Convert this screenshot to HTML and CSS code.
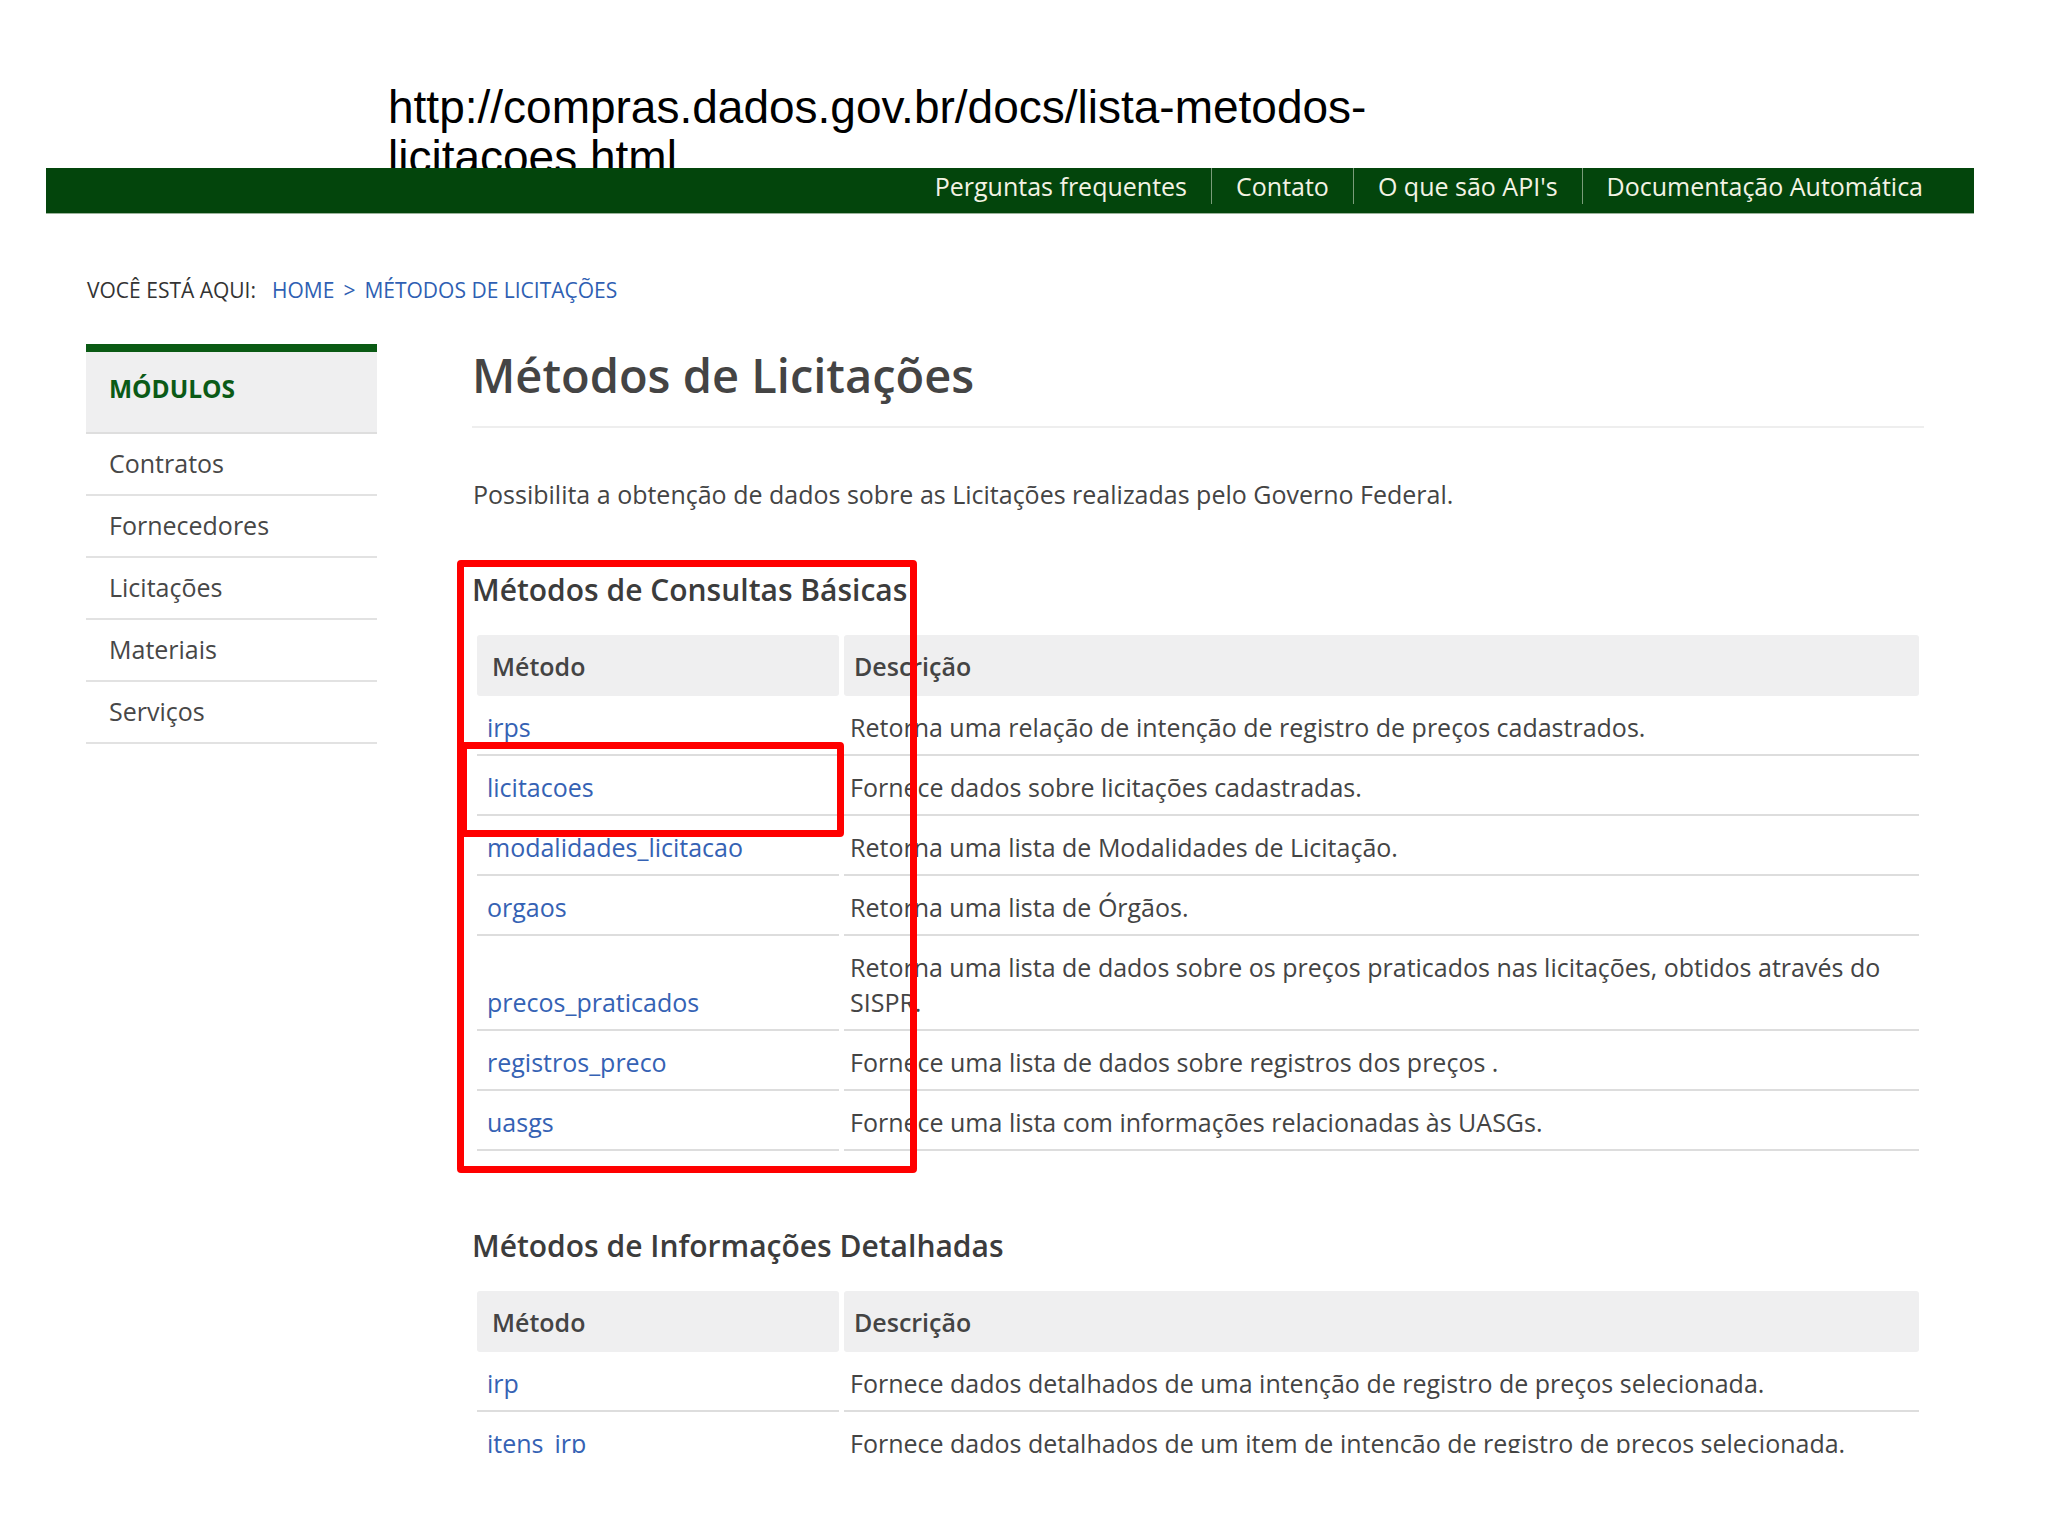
FILE: index.html
```html
<!DOCTYPE html>
<html lang="pt-BR">
<head>
<meta charset="utf-8">
<title>Métodos de Licitações</title>
<link rel="stylesheet" href="styles.css">
</head>
<body>
<div class="slide-head">
  <p class="url">http://compras.dados.gov.br/docs/lista-metodos-<br>licitacoes.html</p>
</div>
<div class="shot">
  <nav class="topnav">
    <a class="nav-item" href="#">Perguntas frequentes</a>
    <a class="nav-item" href="#">Contato</a>
    <a class="nav-item" href="#">O que são API's</a>
    <a class="nav-item" href="#">Documentação Automática</a>
  </nav>
  <div class="crumbs">
    <span class="crumb-label">VOCÊ ESTÁ AQUI:</span>
    <a class="crumb-link" href="#">HOME</a>
    <span class="crumb-sep">&gt;</span>
    <a class="crumb-link" href="#">MÉTODOS DE LICITAÇÕES</a>
  </div>
  <div class="layout">
    <aside class="side">
      <div class="side-head">MÓDULOS</div>
      <a class="side-item" href="#">Contratos</a>
      <a class="side-item" href="#">Fornecedores</a>
      <a class="side-item" href="#">Licitações</a>
      <a class="side-item" href="#">Materiais</a>
      <a class="side-item" href="#">Serviços</a>
    </aside>
    <main class="content">
      <h1 class="page-title">Métodos de Licitações</h1>
      <p class="lead">Possibilita a obtenção de dados sobre as Licitações realizadas pelo Governo Federal.</p>
      <h3 class="sec-title">Métodos de Consultas Básicas</h3>
      <table class="methods">
        <thead>
          <tr><th class="col-m">Método</th><th>Descrição</th></tr>
        </thead>
        <tbody>
          <tr><td><a href="#">irps</a></td><td>Retorna uma relação de intenção de registro de preços cadastrados.</td></tr>
          <tr><td><a href="#">licitacoes</a></td><td>Fornece dados sobre licitações cadastradas.</td></tr>
          <tr><td><a href="#">modalidades_licitacao</a></td><td>Retorna uma lista de Modalidades de Licitação.</td></tr>
          <tr><td><a href="#">orgaos</a></td><td>Retorna uma lista de Órgãos.</td></tr>
          <tr><td><a href="#">precos_praticados</a></td><td>Retorna uma lista de dados sobre os preços praticados nas licitações, obtidos através do SISPR.</td></tr>
          <tr><td><a href="#">registros_preco</a></td><td>Fornece uma lista de dados sobre registros dos preços .</td></tr>
          <tr><td><a href="#">uasgs</a></td><td>Fornece uma lista com informações relacionadas às UASGs.</td></tr>
        </tbody>
      </table>
      <h3 class="sec-title sec-two">Métodos de Informações Detalhadas</h3>
      <table class="methods">
        <thead>
          <tr><th class="col-m">Método</th><th>Descrição</th></tr>
        </thead>
        <tbody>
          <tr><td><a href="#">irp</a></td><td>Fornece dados detalhados de uma intenção de registro de preços selecionada.</td></tr>
          <tr><td><a href="#">itens_irp</a></td><td>Fornece dados detalhados de um item de intenção de registro de preços selecionada.</td></tr>
        </tbody>
      </table>
    </main>
  </div>
  <div class="mark mark-big"></div>
  <div class="mark mark-small"></div>
</div>
</body>
</html>
```
FILE: styles.css
```css
html, body {
  margin: 0;
  padding: 0;
  background: #ffffff;
}
body {
  width: 2048px;
  height: 1535px;
  overflow: hidden;
  font-family: "Open Sans", "Noto Sans", sans-serif;
  color: #444444;
}
a { text-decoration: none; }

/* slide title (URL text box, partly covered by the screenshot) */
.slide-head {
  height: 168px;
  box-sizing: border-box;
  padding: 82px 0 0 388px;
  overflow: hidden;
}
.url {
  margin: 0;
  font-family: "Liberation Sans", Arial, sans-serif;
  font-size: 46px;
  line-height: 50px;
  color: #000000;
  white-space: nowrap;
}

/* screenshot */
.shot {
  position: relative;
  margin-left: 46px;
  width: 1928px;
  height: 1285px;
  overflow: hidden;
  background: #ffffff;
}

.topnav {
  height: 46px;
  background: #03450c;
  display: flex;
  justify-content: flex-end;
  align-items: flex-start;
  padding-right: 27px;
  border-bottom: 1px solid #9bb39b;
  box-sizing: border-box;
}
.nav-item {
  height: 36px;
  line-height: 36px;
  padding: 0 24px;
  font-size: 25px;
  color: #f3f3e4;
  border-left: 1px solid #7a9c7a;
}
.nav-item:first-child { border-left: none; }

.crumbs {
  margin: 61px 0 0 41px;
  font-size: 21px;
  line-height: 30px;
  display: flex;
}
.crumb-label { color: #333333; margin-right: 16px; }
.crumb-link { color: #2f5fb3; }
.crumb-sep { color: #2f5fb3; margin: 0 9px; }

.layout {
  display: flex;
  gap: 95px;
  margin-top: 39px;
  padding-left: 40px;
}

.side {
  width: 291px;
  flex: none;
  display: flex;
  flex-direction: column;
}
.side-head {
  border-top: 8px solid #0a5a14;
  background: #efeff0;
  border-bottom: 2px solid #dedede;
  padding: 21px 23px 27px;
  line-height: 32px;
  font-size: 24.5px;
  font-weight: 700;
  color: #0b5a17;
}
.side-item {
  padding: 12px 23px 13px;
  line-height: 35px;
  font-size: 25px;
  color: #474747;
  border-bottom: 2px solid #e2e2e2;
}

.content {
  width: 1452px;
  flex: none;
}
.page-title {
  margin: 0;
  padding: 1px 0 21px;
  font-size: 47px;
  line-height: 60px;
  font-weight: 600;
  color: #444444;
  border-bottom: 2px solid #eeeeee;
}
.lead {
  margin: 50px 0 0 1px;
  font-size: 25px;
  line-height: 32px;
  color: #444444;
}
.sec-title {
  margin: 60px 0 0;
  font-size: 30px;
  line-height: 40px;
  font-weight: 600;
  color: #3c3c3c;
}
.sec-two { margin-top: 75px; }

.methods {
  margin-top: 25px;
  width: 1452px;
  border-collapse: separate;
  border-spacing: 5px 0;
  font-size: 25px;
  line-height: 35px;
  table-layout: fixed;
}
.methods th {
  background: #efeff0;
  text-align: left;
  font-weight: 600;
  color: #444444;
  padding: 14px 10px 12px;
  border-radius: 3px;
}
.methods th.col-m { width: 334px; padding-left: 15px; padding-right: 13px; }
.methods td {
  padding: 14px 10px 9px 6px;
  border-bottom: 2px solid #dddddd;
  vertical-align: bottom;
  color: #444444;
}
.methods td:first-child { padding-left: 10px; }
.methods td a { color: #3562b4; }

/* red highlight boxes drawn over the screenshot */
.mark {
  position: absolute;
  border: 7px solid #ff0000;
  border-radius: 4px;
  box-sizing: border-box;
}
.mark-big {
  left: 411px;
  top: 392px;
  width: 460px;
  height: 613px;
}
.mark-small {
  left: 414px;
  top: 574px;
  width: 384px;
  height: 95px;
}
```
